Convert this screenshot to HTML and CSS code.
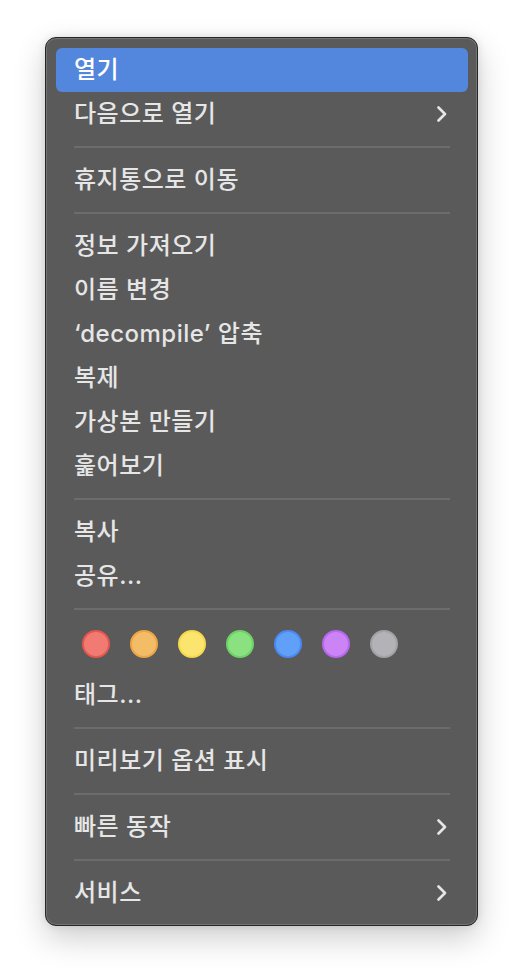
FILE: index.html
```html
<!DOCTYPE html>
<html lang="ko">
<head>
<meta charset="utf-8">
<link rel="stylesheet" href="styles.css">
</head>
<body>
<div class="menu">
  <div class="item active"><span>열기</span></div>
  <div class="item"><span>다음으로 열기</span><svg class="chev" viewBox="0 0 10 16"><polyline points="1.5,1.5 8,8 1.5,14.5"/></svg></div>
  <div class="sep"></div>
  <div class="item"><span>휴지통으로 이동</span></div>
  <div class="sep"></div>
  <div class="item"><span>정보 가져오기</span></div>
  <div class="item"><span>이름 변경</span></div>
  <div class="item"><span>‘decompile’ 압축</span></div>
  <div class="item"><span>복제</span></div>
  <div class="item"><span>가상본 만들기</span></div>
  <div class="item"><span>훑어보기</span></div>
  <div class="sep"></div>
  <div class="item"><span>복사</span></div>
  <div class="item"><span>공유...</span></div>
  <div class="sep"></div>
  <div class="tags">
    <span class="dot red"></span>
    <span class="dot orange"></span>
    <span class="dot yellow"></span>
    <span class="dot green"></span>
    <span class="dot blue"></span>
    <span class="dot purple"></span>
    <span class="dot gray"></span>
  </div>
  <div class="item"><span>태그...</span></div>
  <div class="sep"></div>
  <div class="item"><span>미리보기 옵션 표시</span></div>
  <div class="sep"></div>
  <div class="item"><span>빠른 동작</span><svg class="chev" viewBox="0 0 10 16"><polyline points="1.5,1.5 8,8 1.5,14.5"/></svg></div>
  <div class="sep"></div>
  <div class="item"><span>서비스</span><svg class="chev" viewBox="0 0 10 16"><polyline points="1.5,1.5 8,8 1.5,14.5"/></svg></div>
</div>
</body>
</html>
```
FILE: styles.css
```css
html, body {
  margin: 0;
  padding: 0;
  background: #ffffff;
}
body {
  box-sizing: border-box;
  min-height: 980px;
  padding: 37px 0 0 45px;
  font-family: Inter, "Noto Sans CJK KR", sans-serif;
}
.menu {
  box-sizing: border-box;
  width: 433px;
  height: 889px;
  background: #5a5a5a;
  border: 1px solid #262626;
  border-radius: 11px;
  padding: 10px 9px 10px 10px;
  box-shadow: inset 0 0 0 1px #747474, 0 12px 32px rgba(0, 0, 0, 0.2), 0 0 8px rgba(0, 0, 0, 0.1);
  display: flex;
  flex-direction: column;
}
.item {
  height: 44px;
  flex: none;
  display: flex;
  align-items: center;
  justify-content: space-between;
  padding: 0 21px 0 18px;
  border-radius: 6px;
  color: #e6e6e6;
  font-size: 24px;
  font-weight: 500;
  letter-spacing: 0.5px;
}
.item span {
  line-height: 1;
}
.item.active {
  background: #5387dd;
  color: #ffffff;
}
.chev {
  width: 10px;
  height: 16px;
  fill: none;
  stroke: #e6e6e6;
  stroke-width: 2.6;
  stroke-linecap: round;
  stroke-linejoin: round;
}
.sep {
  flex: none;
  height: 2px;
  margin: 10px 18px;
  background: #6c6c6c;
}
.tags {
  flex: none;
  height: 53px;
  box-sizing: border-box;
  padding: 10px 0 0 26px;
  display: flex;
  gap: 20px;
}
.dot {
  box-sizing: border-box;
  width: 28px;
  height: 28px;
  border-radius: 50%;
  border: 2px solid;
}
.red { background: #f17b73; border-color: #e4574d; }
.orange { background: #f3bc67; border-color: #eca444; }
.yellow { background: #fce56f; border-color: #f6d84c; }
.green { background: #8ae17f; border-color: #6cd263; }
.blue { background: #61a0f8; border-color: #4a89f3; }
.purple { background: #cb83f6; border-color: #b667ee; }
.gray { background: #b3b2b6; border-color: #a2a1a6; }
```
